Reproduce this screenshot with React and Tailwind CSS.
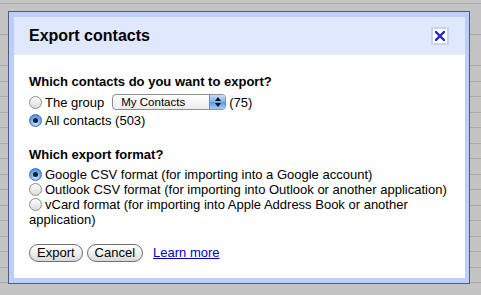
import React from "react";

function Radio({ checked, className = "" }) {
  return (
    <span
      className={
        "relative inline-block w-[13px] h-[13px] rounded-full border shrink-0 " +
        (checked
          ? "border-[#3f6fb8] bg-[radial-gradient(circle_at_50%_75%,#cfe6ff_0%,#7fb3f0_45%,#3f7fd8_100%)] "
          : "border-[#8c8c8c] bg-[linear-gradient(to_bottom,#fdfdfd,#dcdcdc)] ") +
        className
      }
    >
      {checked && (
        <span className="absolute left-1/2 top-1/2 w-[5px] h-[5px] -ml-[2.5px] -mt-[2.5px] rounded-full bg-[#10203a]" />
      )}
    </span>
  );
}

function Btn({ children }) {
  return (
    <button className="h-[18px] px-[7px] rounded-full border border-[#6f6f6f] bg-[linear-gradient(to_bottom,#ffffff_0%,#f0f0f0_50%,#d9d9d9_100%)] text-[13px] leading-[16px] text-black">
      {children}
    </button>
  );
}

export default function App() {
  return (
    <div className="relative w-[481px] h-[295px] overflow-hidden bg-[#c4c4c4] bg-[repeating-linear-gradient(to_bottom,transparent_0px,transparent_3px,#a9a9a9_3px,#a9a9a9_4px,transparent_4px,transparent_15.5px)] font-['Liberation_Sans',Arial,sans-serif] text-black">
      <div className="absolute left-[8px] top-[11px] w-[462px] h-[273px] border border-[#535c72] bg-[#bccefb] pt-[5px] pl-[5px] pr-[4px] pb-[5px] flex flex-col">
        <div className="h-[38px] shrink-0 bg-[#e0e8fd] flex items-center justify-between pl-[15px] pr-[16px]">
          <div className="text-[16px] font-bold">Export contacts</div>
          <div className="w-[18px] h-[18px] bg-white border-2 border-[#c3d3fb] flex items-center justify-center">
            <svg width="10" height="10" viewBox="0 0 10 10">
              <path d="M1 1 L9 9 M9 1 L1 9" stroke="#2424c6" strokeWidth="2.3" strokeLinecap="square" />
            </svg>
          </div>
        </div>
        <div className="flex-1 bg-white pt-[19px] pl-[15px] pr-[15px] text-[13px] leading-[15px]">
          <div className="font-bold h-[15px]">Which contacts do you want to export?</div>
          <div className="mt-[4px] h-[18px] flex items-center">
            <Radio checked={false} />
            <span className="ml-[3px]">The group</span>
            <div className="ml-[8px] w-[114px] h-[16px] rounded-[4px] border border-[#8e8e8e] bg-[linear-gradient(to_bottom,#ffffff,#ececec)] flex items-center overflow-hidden">
              <span className="flex-1 pl-[8px] text-[11.5px] leading-[14px]">My Contacts</span>
              <span className="w-[16px] h-full border-l border-[#6d8fc7] bg-[linear-gradient(to_bottom,#c9defa,#7eb0ef_50%,#5b98e8_51%,#a8cdf8)] flex flex-col items-center justify-center gap-[2px]">
                <svg width="6" height="4" viewBox="0 0 6 4"><path d="M3 0 L6 4 L0 4 Z" fill="#111" /></svg>
                <svg width="6" height="4" viewBox="0 0 6 4"><path d="M0 0 L6 0 L3 4 Z" fill="#111" /></svg>
              </span>
            </div>
            <span className="ml-[3px]">(75)</span>
          </div>
          <div className="mt-[2px] h-[15px] flex items-center">
            <Radio checked={true} />
            <span className="ml-[3px]">All contacts (503)</span>
          </div>

          <div className="mt-[19px] font-bold h-[15px]">Which export format?</div>
          <div className="mt-[5px]">
            <div>
              <Radio checked={true} className="align-[-2px] mr-[3px]" />
              Google CSV format (for importing into a Google account)
            </div>
            <div className="whitespace-nowrap">
              <Radio checked={false} className="align-[-2px] mr-[3px]" />
              Outlook CSV format (for importing into Outlook or another application)
            </div>
            <div>
              <Radio checked={false} className="align-[-2px] mr-[3px]" />
              vCard format (for importing into Apple Address Book or another application)
            </div>
          </div>

          <div className="mt-[17px] flex items-center">
            <Btn>Export</Btn>
            <span className="ml-[4px]"><Btn>Cancel</Btn></span>
            <a href="#" className="ml-[10px] text-[#0000cc] underline leading-[16px]">Learn more</a>
          </div>
        </div>
      </div>
    </div>
  );
}
